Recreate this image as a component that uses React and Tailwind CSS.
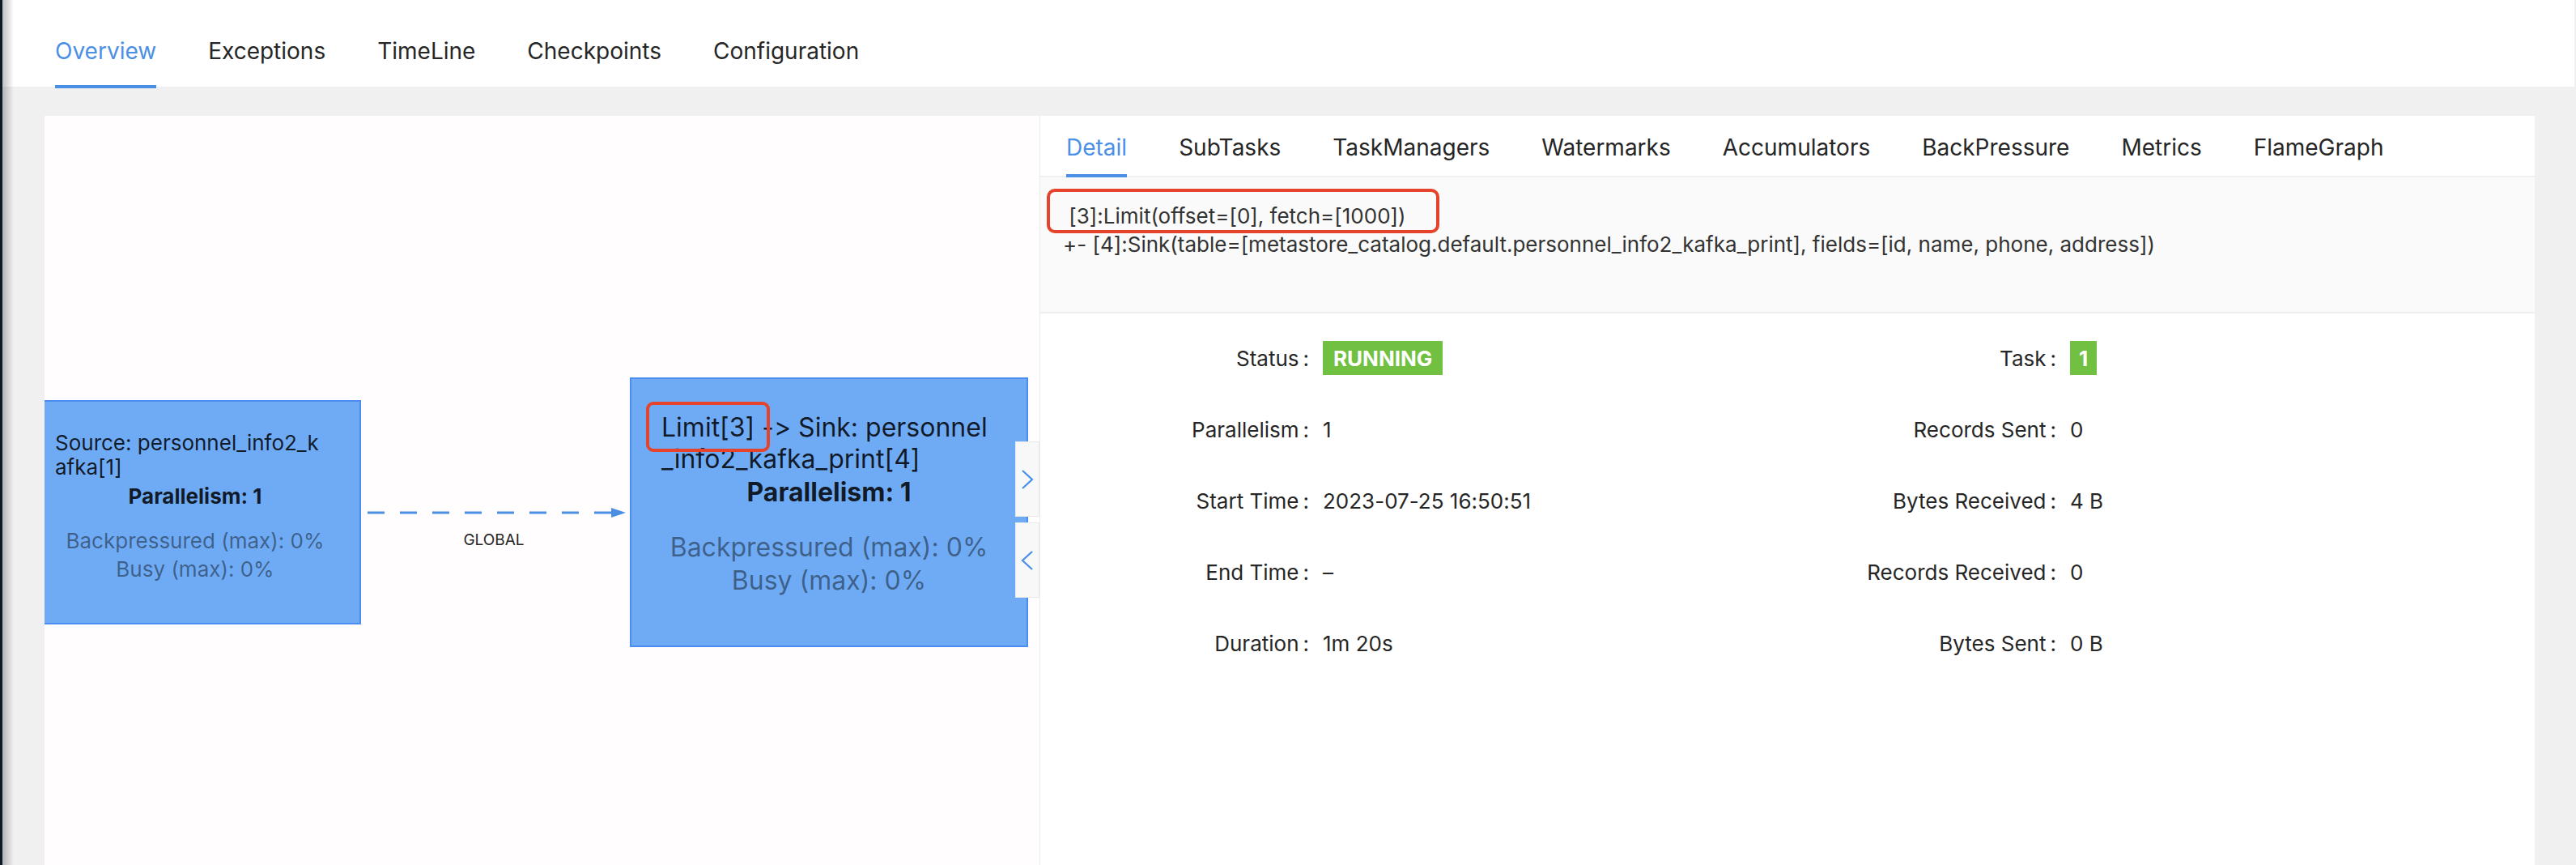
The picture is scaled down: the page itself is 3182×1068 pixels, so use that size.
import React from "react";

function Chevron({ dir }) {
  return (
    <svg width="16" height="26" viewBox="0 0 16 26" fill="none">
      {dir === "right" ? (
        <polyline points="2,2 14,13 2,24" stroke="#4a8fe6" strokeWidth="2.2" fill="none" />
      ) : (
        <polyline points="14,2 2,13 14,24" stroke="#4a8fe6" strokeWidth="2.2" fill="none" />
      )}
    </svg>
  );
}

function Row({ label, children }) {
  return (
    <div className="flex items-center h-[88px]">
      <div className="w-[332px] shrink-0 text-right whitespace-nowrap">
        {label}
        <span className="ml-[5px]">:</span>
      </div>
      <div className="ml-[17px] whitespace-nowrap">{children}</div>
    </div>
  );
}

export default function App() {
  const topTabs = ["Overview", "Exceptions", "TimeLine", "Checkpoints", "Configuration"];
  const subTabs = ["Detail", "SubTasks", "TaskManagers", "Watermarks", "Accumulators", "BackPressure", "Metrics", "FlameGraph"];
  return (
    <div className="relative flex h-[1068px] w-[3182px] overflow-hidden bg-[#f0f0f0] font-[Inter,sans-serif] text-[#262626] [font-feature-settings:'calt'_0,'liga'_0]">
      <div className="w-[3px] shrink-0 bg-[#0d1a2b]" />
      <div className="pointer-events-none absolute left-[3px] top-0 bottom-0 z-10 w-[14px] bg-gradient-to-r from-black/25 to-transparent" />
      <div className="flex flex-1 flex-col min-w-0">
        {/* top tabs */}
        <div className="mr-[2px] flex h-[107px] shrink-0 gap-[64px] bg-white pl-[65px]">
          {topTabs.map((t, i) => (
            <div
              key={t}
              className={
                "relative pt-[46px] text-[28px] leading-[34px] " +
                (i === 0 ? "text-[#4b8fe6]" : "text-[#262626]")
              }
            >
              {t}
              {i === 0 && <div className="absolute left-0 right-0 -bottom-[2px] h-[4px] bg-[#4b8fe6]" />}
            </div>
          ))}
        </div>

        {/* body */}
        <div className="flex min-h-0 flex-1 pl-[52px] pr-[51px] pt-[36px]">
          {/* left graph panel */}
          <div className="relative w-[1229px] shrink-0 overflow-hidden bg-[#fffdfd]">
            {/* source node */}
            <div className="absolute left-[-19px] top-[351px] h-[277px] w-[410px] border-2 border-[#4a8cf0] bg-[#6fabf5] px-[30px] pt-[36px] text-[26px]">
              <div className="whitespace-nowrap leading-[30px] text-black/85">
                Source: personnel_info2_k
                <br />
                afka[1]
              </div>
              <div className="mt-[6px] whitespace-nowrap text-center font-bold leading-[30px] text-black/85">
                Parallelism: 1
              </div>
              <div className="mt-[22px] whitespace-nowrap text-center leading-[35px] text-black/45">
                Backpressured (max): 0%
                <br />
                Busy (max): 0%
              </div>
            </div>

            {/* edge */}
            <svg className="absolute left-[391px] top-[480px]" width="332" height="20" viewBox="0 0 332 20">
              <line x1="8" y1="10" x2="310" y2="10" stroke="#4a8fe3" strokeWidth="3" strokeDasharray="21 19" />
              <polygon points="309,4 327,10 309,16" fill="#4a8fe3" />
            </svg>
            <div className="absolute left-[515px] top-[512px] w-[80px] text-center text-[19px] leading-[24px] text-[#262626]">
              GLOBAL
            </div>

            {/* sink node */}
            <div className="absolute left-[723px] top-[323px] h-[333px] w-[492px] border-2 border-[#4a8cf0] bg-[#6fabf5] px-[37px] pt-[40px] text-[32px]">
              <div className="whitespace-nowrap leading-[39px] text-black/85">
                Limit[3] -&gt; Sink: personnel
                <br />
                _info2_kafka_print[4]
              </div>
              <div className="mt-[2px] whitespace-nowrap text-center font-bold leading-[39px] text-black/85">
                Parallelism: 1
              </div>
              <div className="mt-[28px] whitespace-nowrap text-center leading-[41px] text-black/45">
                Backpressured (max): 0%
                <br />
                Busy (max): 0%
              </div>
              <div className="absolute left-[18px] top-[28px] h-[62px] w-[153px] rounded-[9px] border-4 border-[#e5432b]" />
            </div>

            {/* toggle buttons */}
            <div className="absolute right-0 top-[402px] flex h-[93px] w-[30px] items-center justify-center border border-[#e9e9e9] bg-[#f8f8f8]">
              <Chevron dir="right" />
            </div>
            <div className="absolute right-0 top-[502px] flex h-[93px] w-[30px] items-center justify-center border border-[#e9e9e9] bg-[#f8f8f8]">
              <Chevron dir="left" />
            </div>
          </div>

          {/* right detail panel */}
          <div className="flex min-w-0 flex-1 flex-col border-l border-[#ececec] bg-white">
            <div className="flex h-[76px] shrink-0 gap-[64px] border-b-2 border-[#efefef] pl-[32px]">
              {subTabs.map((t, i) => (
                <div
                  key={t}
                  className={
                    "relative pt-[22px] text-[28px] leading-[34px] " +
                    (i === 0 ? "text-[#4b8fe6]" : "text-[#262626]")
                  }
                >
                  {t}
                  {i === 0 && <div className="absolute left-0 right-0 -bottom-[2px] h-[4px] bg-[#4b8fe6]" />}
                </div>
              ))}
            </div>

            <div className="relative h-[168px] shrink-0 whitespace-pre border-b-2 border-[#eeeeee] bg-[#fafafa] pl-[28px] pt-[30px] text-[26px] leading-[35px] text-[#333333]">
              {" [3]:Limit(offset=[0], fetch=[1000])\n+- [4]:Sink(table=[metastore_catalog.default.personnel_info2_kafka_print], fields=[id, name, phone, address])"}
              <div className="absolute left-[8px] top-[14px] h-[55px] w-[485px] rounded-[10px] border-4 border-[#e5432b]" />
            </div>

            <div className="grid grid-cols-2 pt-[11px] text-[26px] text-[#262626]">
              <Row label="Status">
                <span className="inline-flex h-[42px] items-center bg-[#72c041] px-[13px] font-bold text-white">
                  RUNNING
                </span>
              </Row>
              <Row label="Task">
                <span className="inline-flex h-[42px] items-center bg-[#72c041] px-[11px] font-bold text-white">1</span>
              </Row>
              <Row label="Parallelism">1</Row>
              <Row label="Records Sent">0</Row>
              <Row label="Start Time">2023-07-25 16:50:51</Row>
              <Row label="Bytes Received">4 B</Row>
              <Row label="End Time">–</Row>
              <Row label="Records Received">0</Row>
              <Row label="Duration">1m 20s</Row>
              <Row label="Bytes Sent">0 B</Row>
            </div>
          </div>
        </div>
      </div>
    </div>
  );
}
